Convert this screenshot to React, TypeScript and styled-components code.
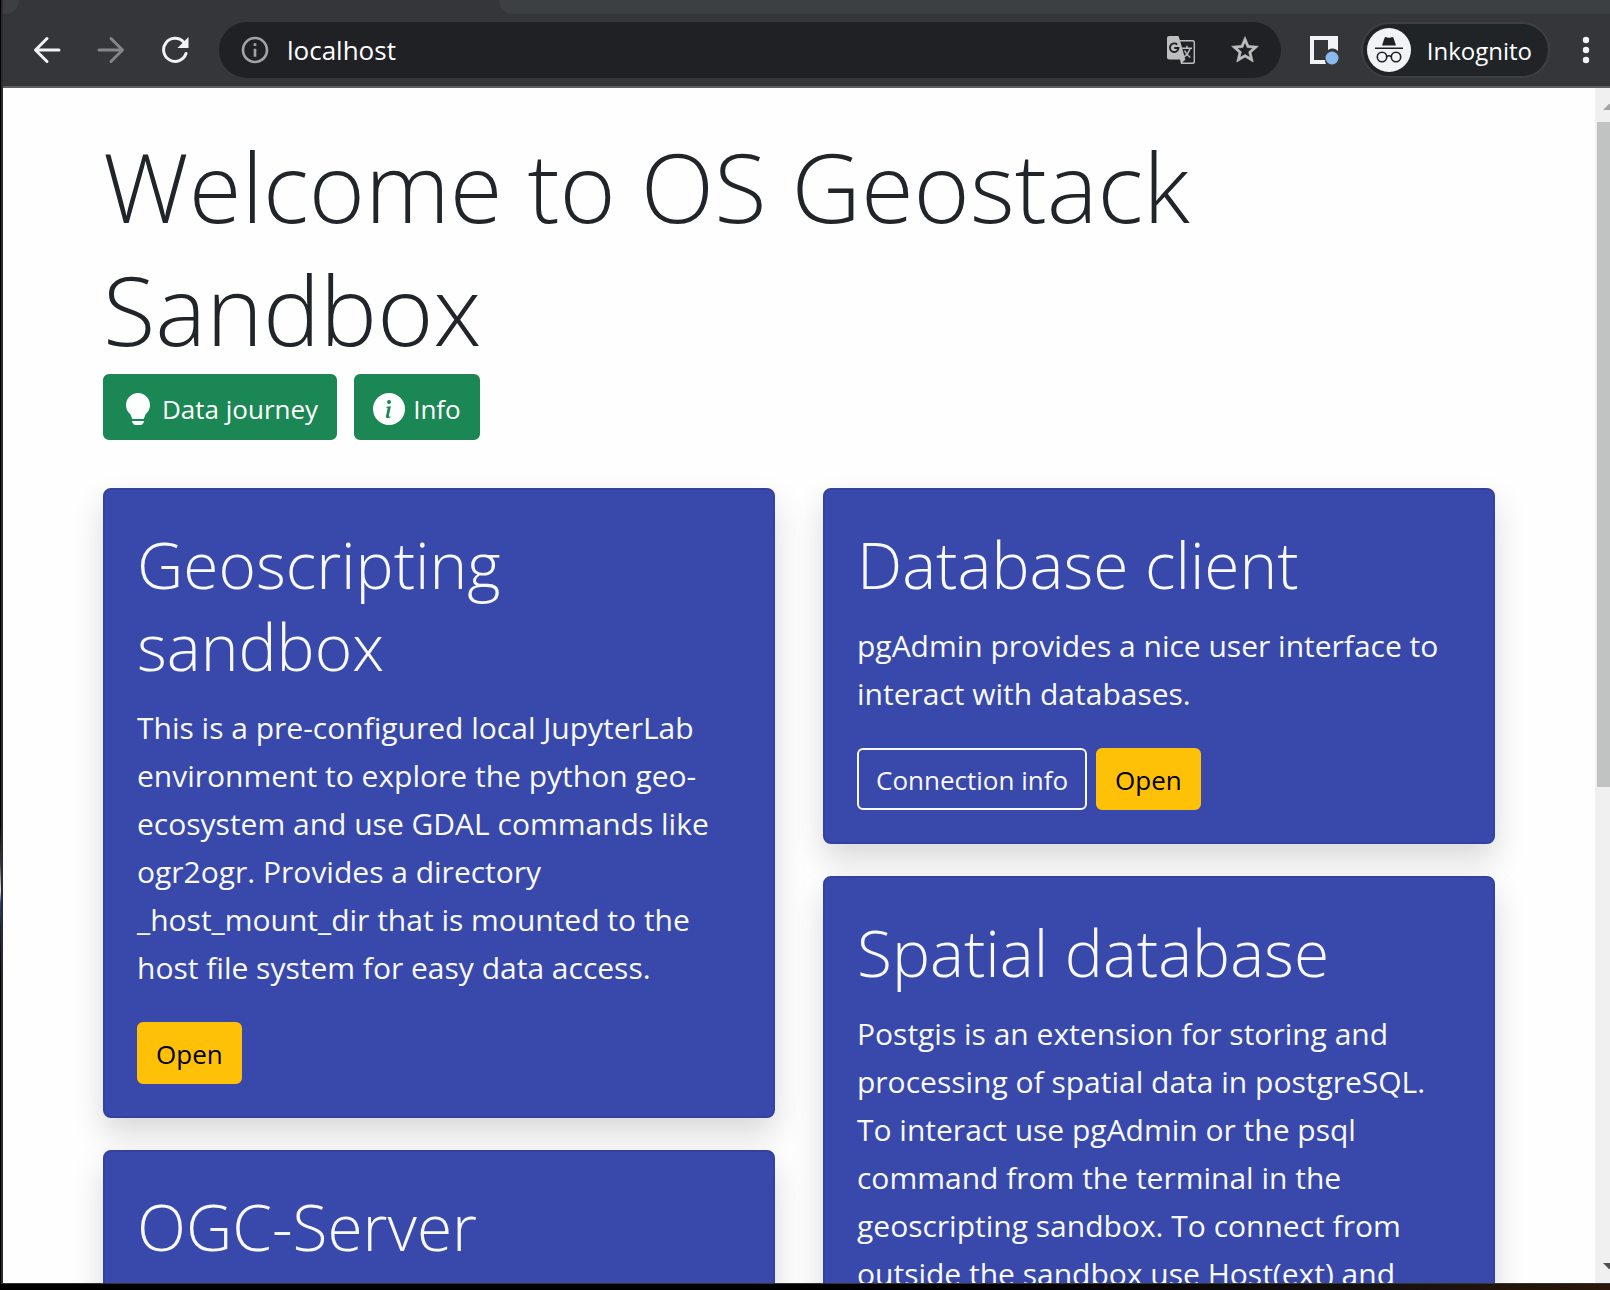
import React from "react";
import styled, { createGlobalStyle } from "styled-components";
import { MdInfoOutline, MdStarOutline } from "react-icons/md";
import { BsInfoCircleFill, BsLightbulbFill } from "react-icons/bs";

const GlobalStyle = createGlobalStyle`
  *, *::before, *::after { box-sizing: border-box; }
  body {
    margin: 0;
    background: #000;
    color: #212529;
    font-family: "Segoe UI", "Open Sans", "Noto Sans", sans-serif;
    font-size: 30px;
    line-height: 48px;
  }
  h1, h2, p { margin: 0; }
  button, input { font-family: inherit; }
`;

const Desktop = styled.div`
  display: flex;
  flex-direction: column;
  height: 100vh;
  padding-left: 1px;
  background: linear-gradient(#000 64%, #3a3f45 67%, #e4e6ea 69%, #2b3f9c 70%, #1a2138 72%, #000 76%);
`;

const BrowserWindow = styled.div`
  display: flex;
  flex-direction: column;
  flex: 1;
  min-height: 0;
  border-left: 2px solid #2d2d2f;
  overflow: hidden;
`;

const Taskbar = styled.div`
  height: 7px;
  border-top: 1px solid #333;
  background: linear-gradient(90deg, #000 60%, #14100c 85%, #2a1709);
`;

const TabStrip = styled.div`
  display: flex;
  gap: 480px;
  height: 14px;
  background: #35363a;
`;

const InactiveTab = styled.div<{ $side: "left" | "right" }>`
  flex: ${(p) => (p.$side === "left" ? "0 0 16px" : "1")};
  background: #3c4043;
  border-radius: ${(p) => (p.$side === "left" ? "0 0 16px 0" : "0 0 0 16px")};
`;

const Toolbar = styled.header`
  display: flex;
  align-items: center;
  height: 74px;
  padding: 8px 8px 8px 28px;
  background: #35363a;
  border-bottom: 2px solid #5f5e5f;
`;

const NavButtons = styled.nav`
  display: flex;
  gap: 32px;
  margin-right: 28px;
`;

const IconButton = styled.button<{ $color?: string }>`
  display: flex;
  align-items: center;
  justify-content: center;
  width: 32px;
  height: 32px;
  padding: 0;
  border: 0;
  background: none;
  color: ${(p) => p.$color ?? "#f1f3f4"};
`;

const AddressBar = styled.div`
  display: flex;
  align-items: center;
  flex: 1;
  min-width: 0;
  height: 56px;
  padding: 0 20px;
  border-radius: 28px;
  background: #202124;
  color: #9aa0a6;
`;

const Address = styled.input`
  flex: 1;
  min-width: 0;
  margin: 0 16px;
  padding: 0;
  border: 0;
  outline: 0;
  background: none;
  color: #fff;
  font-size: 26px;
`;

const AddressActions = styled.div`
  display: flex;
  gap: 32px;
`;

const ToolbarActions = styled.div`
  display: flex;
  align-items: center;
  margin-left: 28px;
`;

const Profile = styled.button`
  display: flex;
  align-items: center;
  gap: 16px;
  height: 56px;
  margin: 0 20px;
  padding: 0 16px 0 4px;
  border: 2px solid #3c4043;
  border-radius: 28px;
  background: #202427;
  color: #fff;
  font-size: 24px;
`;

const Viewport = styled.div`
  display: flex;
  flex: 1;
  min-height: 0;
  background: #fefefe;
`;

const Page = styled.main`
  flex: 1;
  min-width: 0;
  overflow: hidden;
`;

const Container = styled.div`
  max-width: 1440px;
  margin: 0 auto;
  padding: 36px 24px;
`;

const Title = styled.h1`
  margin-bottom: 4px;
  font-size: 96px;
  font-weight: 300;
  line-height: 123px;
`;

const ActionRow = styled.div<{ $gap: number }>`
  display: flex;
  gap: ${(p) => p.$gap}px;
`;

const buttonLooks = {
  success: { background: "#1b8754", border: "#1b8754", color: "#fff" },
  warning: { background: "#ffc107", border: "#ffc107", color: "#000" },
  outline: { background: "transparent", border: "#f8f9fa", color: "#f8f9fa" },
};

const Button = styled.button<{ $look: keyof typeof buttonLooks; $tall?: boolean }>`
  display: flex;
  align-items: center;
  gap: 8px;
  height: ${(p) => (p.$tall ? 66 : 62)}px;
  padding: ${(p) => (p.$tall ? 4 : 2)}px 17px 0;
  border: 2px solid ${(p) => buttonLooks[p.$look].border};
  border-radius: 6px;
  background: ${(p) => buttonLooks[p.$look].background};
  color: ${(p) => buttonLooks[p.$look].color};
  font-size: 26px;
  white-space: nowrap;
`;

const Columns = styled.div`
  display: grid;
  grid-template-columns: 1fr 1fr;
  align-items: start;
  gap: 48px;
  margin-top: 48px;
`;

const Column = styled.div`
  display: flex;
  flex-direction: column;
  gap: 32px;
`;

const CardBox = styled.section`
  padding: 34px 32px 32px;
  border: 2px solid #3441a0;
  border-radius: 8px;
  background: #3949ab;
  color: #f8f9fa;
  box-shadow: 0 16px 32px rgba(0, 0, 0, 0.15);
`;

const CardTitle = styled.h2`
  margin-bottom: 16px;
  font-size: 64px;
  font-weight: 300;
  line-height: 82px;
`;

const CardText = styled.p`
  margin-bottom: 30px;
`;

const Scrollbar = styled.div`
  display: flex;
  flex-direction: column;
  justify-content: space-between;
  width: 15px;
  padding: 16px 0 14px 2px;
  background: #f0f0f0;
  color: #a3a3a3;
`;

const Thumb = styled.div`
  flex: 0 0 665px;
  margin: 12px 0 auto;
  background: #c1c3c2;
`;

const BackIcon = () => (
  <svg width="28" height="28" viewBox="0 0 28 28" fill="none" stroke="currentColor" strokeWidth="3" strokeLinecap="round" strokeLinejoin="round">
    <path d="M26 14H3M14 2.5 2.5 14 14 25.500" />
  </svg>
);

const ForwardIcon = () => (
  <svg width="28" height="28" viewBox="0 0 28 28" fill="none" stroke="currentColor" strokeWidth="3" strokeLinecap="round" strokeLinejoin="round">
    <path d="M2 14h23M14 2.500 25.500 14 14 25.500" />
  </svg>
);

const ReloadIcon = () => (
  <svg width="28" height="28" viewBox="0 0 28 28">
    <path d="M22.500 6A11.500 11.500 0 1 0 25 17.500" fill="none" stroke="currentColor" strokeWidth="3" strokeLinecap="round" />
    <path d="M27.500 1v11h-11z" fill="currentColor" />
  </svg>
);

const TranslateIcon = () => (
  <svg width="28" height="28" viewBox="0 0 28 28">
    <path d="M13 4.700h12.500q1.800 0 1.800 1.800v19q0 1.800-1.800 1.800H14" fill="none" stroke="currentColor" strokeWidth="1.400" />
    <path d="M2 0h9.500l1.500 4.500 5.300 19H2q-2 0-2-2V2q0-2 2-2zM13 23.500h5.300L14 28z" fill="currentColor" />
    <path d="M10.200 8.600A4.300 4.300 0 1 0 11.500 12H7.300" fill="none" stroke="#202124" strokeWidth="1.900" />
    <path d="M15 12.200h10M20 9.800v2.400M23 12.500q-1.500 5.500-6 8.300M17.500 14.500q2.300 4.500 5.800 7" fill="none" stroke="currentColor" strokeWidth="1.500" />
  </svg>
);

const SidePanelIcon = () => (
  <svg width="29" height="29" viewBox="0 0 29 29">
    <path d="M0 0h28v15a7.500 7.500 0 0 0-10-1V4H4v20h11a7 7 0 0 0 1 4H0z" fill="#f1f3f4" />
    <circle cx="22" cy="22" r="6.500" fill="#8ab9ee" />
  </svg>
);

const IncognitoIcon = () => (
  <svg width="44" height="44" viewBox="0 0 44 44">
    <circle cx="22" cy="22" r="22" fill="#f1f3f4" />
    <path d="M15 17.500 17.500 10q.6-1.300 2-.8 2.500 1 5 0 1.400-.5 2 .8L29 17.500z" fill="#202124" />
    <g fill="none" stroke="#202124" strokeWidth="1.600">
      <path d="M8 20.300h28M19.800 28.500q2.200-1.400 4.400 0" />
      <circle cx="15" cy="29" r="4.700" />
      <circle cx="29" cy="29" r="4.700" />
    </g>
  </svg>
);

const MenuIcon = () => (
  <svg width="8" height="28" viewBox="0 0 8 28" fill="currentColor">
    <circle cx="4" cy="4" r="3.200" />
    <circle cx="4" cy="14" r="3.200" />
    <circle cx="4" cy="24" r="3.200" />
  </svg>
);

const ScrollArrow = ({ down }: { down?: boolean }) => (
  <svg width="13" height="6" viewBox="0 0 13 6" fill={down ? "#505050" : "currentColor"}>
    <path d={down ? "M6 0h7v6h-1z" : "M12 0h1v6H6z"} />
  </svg>
);

type CardProps = { title: string; text: string; connection?: boolean };

const Card = ({ title, text, connection }: CardProps) => (
  <CardBox>
    <CardTitle>{title}</CardTitle>
    <CardText>{text}</CardText>
    <ActionRow $gap={9}>
      {connection && <Button $look="outline">Connection info</Button>}
      <Button $look="warning">Open</Button>
    </ActionRow>
  </CardBox>
);

export default function App() {
  return (
    <>
      <GlobalStyle />
      <Desktop>
        <BrowserWindow>
          <TabStrip>
            <InactiveTab $side="left" />
            <InactiveTab $side="right" />
          </TabStrip>
          <Toolbar>
            <NavButtons>
              <IconButton aria-label="Back"><BackIcon /></IconButton>
              <IconButton aria-label="Forward" $color="#85868a"><ForwardIcon /></IconButton>
              <IconButton aria-label="Reload"><ReloadIcon /></IconButton>
            </NavButtons>
            <AddressBar>
              <IconButton aria-label="Site information" $color="#a3a3a7"><MdInfoOutline size={32} /></IconButton>
              <Address aria-label="Address" defaultValue="localhost" />
              <AddressActions>
                <IconButton aria-label="Translate" $color="#bdbfbf"><TranslateIcon /></IconButton>
                <IconButton aria-label="Bookmark" $color="#bdbfbf"><MdStarOutline size={34} stroke="currentColor" strokeWidth={0.5} /></IconButton>
              </AddressActions>
            </AddressBar>
            <ToolbarActions>
              <IconButton aria-label="Side panel"><SidePanelIcon /></IconButton>
              <Profile><IncognitoIcon />Inkognito</Profile>
              <IconButton aria-label="Menu"><MenuIcon /></IconButton>
            </ToolbarActions>
          </Toolbar>
          <Viewport>
            <Page>
              <Container>
                <Title>Welcome to OS Geostack Sandbox</Title>
                <ActionRow $gap={17}>
                  <Button $look="success" $tall><BsLightbulbFill size={32} />Data journey</Button>
                  <Button $look="success" $tall><BsInfoCircleFill size={32} />Info</Button>
                </ActionRow>
                <Columns>
                  <Column>
                    <Card
                      title="Geoscripting sandbox"
                      text="This is a pre-configured local JupyterLab environment to explore the python geo-ecosystem and use GDAL commands like ogr2ogr. Provides a directory _host_mount_dir that is mounted to the host file system for easy data access."
                    />
                    <CardBox>
                      <CardTitle>OGC-Server</CardTitle>
                    </CardBox>
                  </Column>
                  <Column>
                    <Card
                      title="Database client"
                      text="pgAdmin provides a nice user interface to interact with databases."
                      connection
                    />
                    <CardBox>
                      <CardTitle>Spatial database</CardTitle>
                      <CardText>
                        Postgis is an extension for storing and processing of spatial data in postgreSQL. To interact use
                        pgAdmin or the psql command from the terminal in the geoscripting sandbox. To connect from outside
                        the sandbox use Host(ext) and
                      </CardText>
                    </CardBox>
                  </Column>
                </Columns>
              </Container>
            </Page>
            <Scrollbar>
              <ScrollArrow />
              <Thumb />
              <ScrollArrow down />
            </Scrollbar>
          </Viewport>
        </BrowserWindow>
        <Taskbar />
      </Desktop>
    </>
  );
}
